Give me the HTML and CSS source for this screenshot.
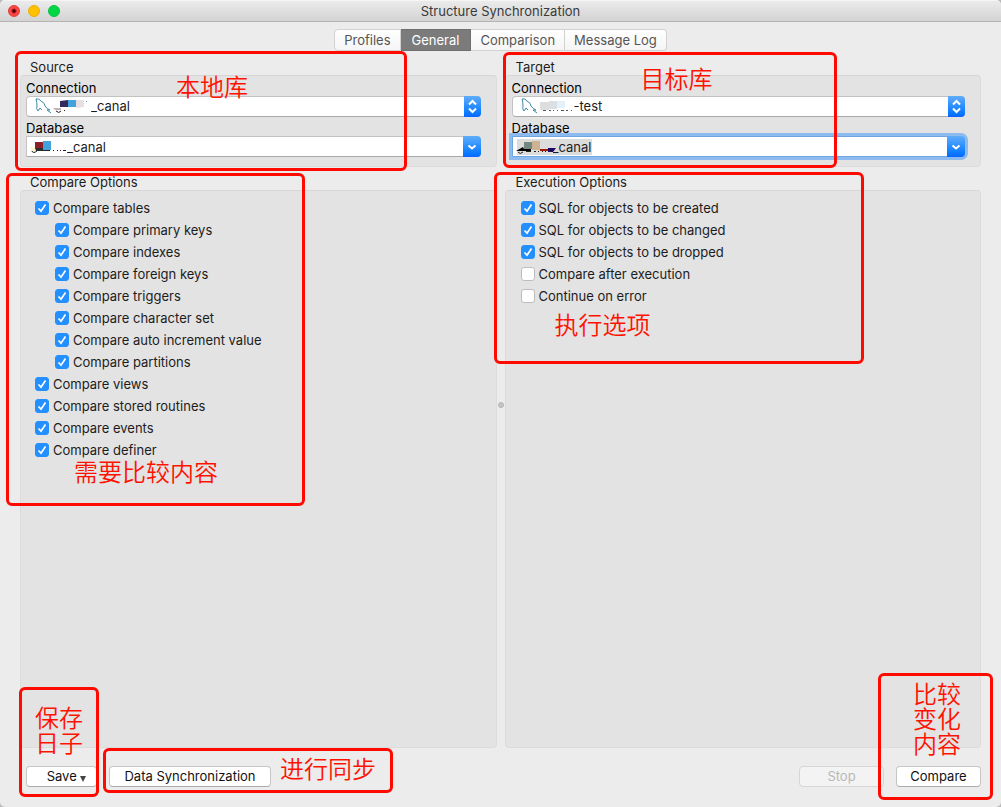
FILE: index.html
```html
<!DOCTYPE html>
<html lang="en">
<head>
    <meta charset="utf-8">
    <title>Structure Synchronization</title>
    <link rel="stylesheet" href="styles.css">
</head>
<body>
    <div class="window">
        <header class="titlebar">
            <div class="lights">
                <span class="light close"></span>
                <span class="light minimize"></span>
                <span class="light maximize"></span>
            </div>
            <h1>Structure Synchronization</h1>
        </header>

        <nav class="tabs">
            <button type="button">Profiles</button>
            <button type="button" class="active">General</button>
            <button type="button">Comparison</button>
            <button type="button">Message Log</button>
        </nav>

        <main class="columns">
            <!-- Source -->
            <section class="group">
                <h2>Source</h2>
                <div class="panel fields">
                    <label for="sourceConnection">Connection</label>
                    <div class="field popup">
                        <svg class="art" width="70" height="19" viewBox="0 0 70 19">
                            <path class="dolphin" d="M11 14 Q9 12 10 9 Q10 5 9 2 Q12 1 14 4 Q18 6 18 9 Q20 12 23 13 L20 13 L24 16 M11 14 L13 11 L15 13"/>
                            <path fill="#c5b1b3" d="M26 11h8v2h-6z"/>
                            <path fill="#312b60" d="M33 4l8-1v7h-8z"/>
                            <path fill="#42a3dc" d="M41 3h8v7h-8z"/>
                            <path fill="#e8dfe2" d="M49 3h8v7l-8 1z"/>
                            <path fill="none" stroke="#222" d="M29 14q3 3 5 0M37 13.500h1"/>
                            <path fill="#42a3dc" d="M59 4h1v1h-1z"/>
                        </svg>
                        <select id="sourceConnection" class="after-icon"><option>_canal</option></select>
                        <span class="arrow"><svg width="17" height="21" viewBox="0 0 17 21"><path d="M5 8.500l3.500-3.500 3.500 3.500M5 12.500l3.500 3.500 3.500-3.500"/></svg></span>
                    </div>
                    <label for="sourceDatabase">Database</label>
                    <div class="field combo">
                        <svg class="art" width="50" height="19" viewBox="0 0 50 19">
                            <path fill="#fff5d5" d="M3 10h5v5H4z"/>
                            <path fill="#8b1e27" d="M8 5h8v6H8z"/>
                            <path fill="#42a3dc" d="M16 4h8v9h-8z"/>
                            <path fill="#2a2b30" d="M8 11h8v3H9z"/>
                            <path fill="none" stroke="#222" d="M5 14q1 3 5 0M16 13.500h7M26 13.500h1M30 13.500h1M33 13.500h1M36 13.500h3"/>
                        </svg>
                        <input type="text" id="sourceDatabase" value="_canal">
                        <button type="button" class="arrow" aria-label="Show databases"><svg width="18" height="21" viewBox="0 0 18 21"><path d="M5.500 9.500l3.500 3 3.500-3"/></svg></button>
                    </div>
                </div>
                <div class="note note-source" lang="zh">本地库</div>
            </section>

            <!-- Target -->
            <section class="group">
                <h2>Target</h2>
                <div class="panel fields">
                    <label for="targetConnection">Connection</label>
                    <div class="field popup">
                        <svg class="art" width="70" height="19" viewBox="0 0 70 19">
                            <path class="dolphin" d="M11 14 Q9 12 10 9 Q10 5 9 2 Q12 1 14 4 Q18 6 18 9 Q20 12 23 13 L20 13 L24 16 M11 14 L13 11 L15 13"/>
                            <path fill="#dedede" d="M27 5h9v8h-9z"/>
                            <path fill="#d9e0e5" d="M36 4h8v8h-8z"/>
                            <path fill="#e4f1fa" d="M44 4h8v7h-8z"/>
                            <path fill="none" stroke="#555" d="M30 13.500h3M36 13.500h2M40 13.500h1M44 13.500h1M48 13.500h3M53 13.500h2M58 13.500h1"/>
                        </svg>
                        <select id="targetConnection" class="after-mask"><option>-test</option></select>
                        <span class="arrow"><svg width="17" height="21" viewBox="0 0 17 21"><path d="M5 8.500l3.500-3.500 3.500 3.500M5 12.500l3.500 3.500 3.500-3.500"/></svg></span>
                    </div>
                    <label for="targetDatabase">Database</label>
                    <div class="field combo focused">
                        <svg class="art" width="80" height="19" viewBox="0 0 80 19">
                            <path fill="#dcdcdc" d="M4 2h75v16H4z"/>
                            <path fill="#000" d="M3 14l7-4 1 2h7v2z"/>
                            <path fill="#72877f" d="M11 5h8v7h-8z"/>
                            <path fill="#cdb293" d="M19 4h8v9h-8z"/>
                            <path fill="#a01c09" d="M27 12h8v2h-8z"/>
                            <path fill="#1d0566" d="M35 11h8l-3 4h-5z"/>
                            <path fill="none" stroke="#222" d="M5 15q2 3 5 0M13 14.500h5M21 14.500h2M25 14.500h1M29 14.500h1M32 14.500h1M36 14.500h2"/>
                        </svg>
                        <input type="text" id="targetDatabase" value="_canal">
                        <button type="button" class="arrow" aria-label="Show databases"><svg width="18" height="21" viewBox="0 0 18 21"><path d="M5.500 9.500l3.500 3 3.500-3"/></svg></button>
                    </div>
                </div>
                <div class="note note-target" lang="zh">目标库</div>
            </section>

            <!-- Compare options -->
            <section class="group">
                <h2>Compare Options</h2>
                <div class="panel options">
                    <label><input type="checkbox" checked>Compare tables</label>
                    <div class="children">
                        <label><input type="checkbox" checked>Compare primary keys</label>
                        <label><input type="checkbox" checked>Compare indexes</label>
                        <label><input type="checkbox" checked>Compare foreign keys</label>
                        <label><input type="checkbox" checked>Compare triggers</label>
                        <label><input type="checkbox" checked>Compare character set</label>
                        <label><input type="checkbox" checked>Compare auto increment value</label>
                        <label><input type="checkbox" checked>Compare partitions</label>
                    </div>
                    <label><input type="checkbox" checked>Compare views</label>
                    <label><input type="checkbox" checked>Compare stored routines</label>
                    <label><input type="checkbox" checked>Compare events</label>
                    <label><input type="checkbox" checked>Compare definer</label>
                </div>
                <div class="note note-compare" lang="zh">需要比较内容</div>
            </section>

            <!-- Execution options -->
            <section class="group">
                <span class="splitter"></span>
                <h2>Execution Options</h2>
                <div class="panel options">
                    <label><input type="checkbox" checked>SQL for objects to be created</label>
                    <label><input type="checkbox" checked>SQL for objects to be changed</label>
                    <label><input type="checkbox" checked>SQL for objects to be dropped</label>
                    <label><input type="checkbox">Compare after execution</label>
                    <label><input type="checkbox">Continue on error</label>
                </div>
                <div class="note note-execution" lang="zh">执行选项</div>
            </section>
        </main>

        <footer class="actions">
            <button type="button" class="save">Save <svg width="6" height="6" viewBox="0 0 6 6"><path d="M0 0h6L3 6z"/></svg></button>
            <button type="button" class="sync">Data Synchronization</button>
            <button type="button" class="stop" disabled>Stop</button>
            <button type="button" class="compare">Compare</button>
            <div class="note note-save" lang="zh">保存<br>日子</div>
            <div class="note note-sync" lang="zh">进行同步</div>
            <div class="note note-run" lang="zh">比较<br>变化<br>内容</div>
        </footer>
    </div>
</body>
</html>
```
FILE: styles.css
```css
* {
    box-sizing: border-box;
}
body {
    margin: 0;
    background: #b9b9b9;
    color: #1c1c1c;
    font-family: Inter, "Liberation Sans", "Noto Sans CJK SC", sans-serif;
    font-size: 13px;
}
button, input, select {
    font: inherit;
    color: inherit;
}
.window {
    display: flex;
    flex-direction: column;
    min-height: 100vh;
    background: #ececec;
    border-radius: 5px;
    overflow: hidden;
}

/* title bar */
.titlebar {
    position: relative;
    display: flex;
    align-items: center;
    justify-content: center;
    height: 22px;
    background: linear-gradient(#ebebeb, #d3d3d3);
    border-top: 1px solid #f5f5f5;
    border-bottom: 1px solid #b4b4b4;
}
.titlebar h1 {
    margin: 0;
    font-size: 13px;
    font-weight: 400;
    color: #3a3a3a;
}
.lights {
    position: absolute;
    left: 8px;
    top: 4px;
    display: flex;
    gap: 8px;
}
.light {
    width: 12px;
    height: 12px;
    border-radius: 50%;
}
.close {
    background: radial-gradient(circle, #4d0000 1px, #fc4646 3px);
    border: 1px solid #e23b3b;
}
.minimize {
    background: #ffc000;
    border: 1px solid #e9ad0a;
}
.maximize {
    background: #04d745;
    border: 1px solid #0ac23f;
}

/* tabs */
.tabs {
    display: flex;
    justify-content: center;
    margin: 7px 0 8px;
}
.tabs button {
    height: 22px;
    padding: 0 9px;
    border: 1px solid #d2d2d2;
    border-left-width: 0;
    background: linear-gradient(#fff, #f5f5f5);
    color: #555;
}
.tabs button:first-child {
    border-left-width: 1px;
    border-radius: 4px 0 0 4px;
}
.tabs button:last-child {
    border-radius: 0 4px 4px 0;
}
.tabs .active {
    padding: 0 11px;
    background: #7b7b7b;
    border-color: #6f6f6f;
    color: #fff;
}

/* groups */
.columns {
    flex: 1;
    display: grid;
    grid-template-columns: 1fr 1fr;
    grid-template-rows: auto 1fr;
    gap: 7px 8px;
    padding: 0 20px;
}
.group {
    position: relative;
    display: flex;
    flex-direction: column;
}
.group h2 {
    margin: 0;
    padding-left: 10px;
    font-size: 13px;
    line-height: 16px;
    font-weight: 400;
}
.group:nth-child(even) h2 {
    padding-left: 11px;
}
.panel {
    flex: 1;
    background: #e3e3e3;
    border: 1px solid #dcdcdc;
    border-top-color: #d6d6d6;
    border-radius: 4px;
}
.fields {
    display: flex;
    flex-direction: column;
    padding: 4px 15px 9px 5px;
}
.group:nth-child(even) .fields {
    padding-left: 6px;
}
.fields label {
    line-height: 16px;
    color: #000;
}
.field {
    position: relative;
    display: flex;
    height: 21px;
    background: #fff;
    border: 1px solid #c3c3c3;
    border-bottom-color: #a9a9a9;
}
.field + label {
    margin-top: 3px;
}
.popup {
    border-radius: 4px;
}
.combo {
    border-radius: 0 4px 4px 0;
}
.focused {
    border-color: #6ea4e0;
    box-shadow: 0 0 0 3px #8dbbef;
}
.field select, .field input {
    appearance: none;
    position: relative;
    flex: 1;
    min-width: 0;
    padding: 0 0 0 40px;
    border: 0;
    background: transparent;
    outline: 0;
}
.field .after-icon {
    padding-left: 64px;
    padding-bottom: 1px;
}
.field .after-mask {
    padding-left: 61px;
    padding-bottom: 1px;
}
.art {
    position: absolute;
    left: 0;
    top: 0;
}
.dolphin {
    fill: none;
    stroke: #3c8ba5;
}
.arrow {
    display: flex;
    margin: -1px -1px -1px 0;
    padding: 0;
    border: 0;
    border-radius: 0 4px 4px 0;
    background: linear-gradient(#5fadfb, #0a7bff 80%, #0a65ff);
}
.popup .arrow {
    pointer-events: none;
}
.arrow path {
    fill: none;
    stroke: #fff;
    stroke-width: 2;
}

/* check boxes */
.options {
    padding: 6px 14px;
}
.group:nth-child(even) .options {
    padding-left: 15px;
}
.options label {
    display: flex;
    align-items: center;
    gap: 4px;
    height: 22px;
}
.children {
    padding-left: 20px;
}
.options input {
    appearance: none;
    width: 14px;
    height: 14px;
    margin: 0;
    background: #fff;
    border: 1px solid #bdbdbd;
    border-radius: 3px;
}
.options input:checked {
    background: #2490ff url("data:image/svg+xml,%3Csvg xmlns='http://www.w3.org/2000/svg' viewBox='0 0 12 12'%3E%3Cpath d='M2.500 6.500L5 9.200L9.500 2.500' fill='none' stroke='white' stroke-width='1.700'/%3E%3C/svg%3E") center / 12px no-repeat;
    border-color: #2490ff;
}
.splitter {
    position: absolute;
    left: -7px;
    top: 228px;
    width: 6px;
    height: 6px;
    border-radius: 50%;
    background: #c4c4c4;
    border: 1px solid #b4b4b4;
}

/* bottom buttons */
.actions {
    position: relative;
    display: flex;
    gap: 12px;
    padding: 18px 20px 20px 26px;
}
.actions button {
    height: 21px;
    padding: 0 0 1px;
    background: #fff;
    border: 1px solid #c6c6c6;
    border-bottom-color: #acacac;
    border-radius: 4px;
    color: #111;
}
.actions .save {
    width: 71px;
    padding-left: 10px;
}
.actions .save svg {
    fill: #444;
    vertical-align: -1px;
}
.actions .sync {
    width: 162px;
}
.actions .stop {
    width: 85px;
    margin-left: auto;
    background: #f3f3f3;
    border-color: #d6d6d6;
    color: #b8b8b8;
}
.actions .compare {
    width: 85px;
}

/* red marker notes */
.note {
    position: absolute;
    border: 3px solid #ff0a00;
    border-radius: 6px;
    color: #ff1200;
    font-family: "Noto Sans CJK SC", sans-serif;
    font-size: 24px;
    font-weight: 350;
    line-height: 25px;
    white-space: nowrap;
    pointer-events: none;
}
.note-source {
    left: -5px;
    top: -8px;
    width: 392px;
    height: 120px;
    padding: 19px 0 0 158px;
}
.note-target {
    left: -2px;
    top: -7px;
    width: 334px;
    height: 116px;
    padding: 10px 0 0 135px;
}
.note-compare {
    left: -14px;
    top: -1px;
    width: 299px;
    height: 333px;
    padding: 282px 0 0 65px;
}
.note-execution {
    left: -11px;
    top: -2px;
    width: 370px;
    height: 192px;
    padding: 136px 0 0 58px;
}
.note-save {
    left: 19px;
    bottom: 10px;
    width: 80px;
    height: 110px;
    padding: 14px 0 0 13px;
}
.note-sync {
    left: 103px;
    top: 0;
    width: 290px;
    height: 45px;
    padding: 4px 0 0 174px;
}
.note-run {
    right: 8px;
    bottom: 7px;
    width: 115px;
    height: 127px;
    padding: 4px 0 0 32px;
}
```
